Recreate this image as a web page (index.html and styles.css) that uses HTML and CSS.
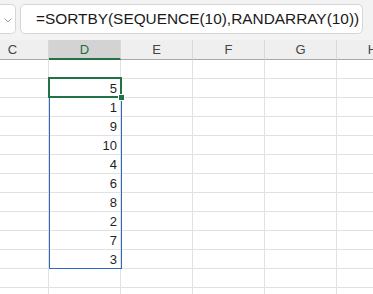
FILE: index.html
```html
<!DOCTYPE html>
<html lang="en">
<head>
    <meta charset="UTF-8">
    <title>SORTBY</title>
    <link rel="stylesheet" href="styles.css">
</head>
<body>
    <div class="formula-bar">
        <div class="name-box">
            <svg class="chevron" width="8" height="5" viewBox="0 0 8 5">
                <path d="M0.5 0.5 L4 4 L7.5 0.5" fill="none" stroke="#9a9a9a" stroke-width="1"/>
            </svg>
        </div>
        <div class="formula-input">=SORTBY(SEQUENCE(10),RANDARRAY(10))</div>
    </div>

    <div class="sheet">
        <div class="col-head">C</div>
        <div class="col-head active">D</div>
        <div class="col-head">E</div>
        <div class="col-head">F</div>
        <div class="col-head">G</div>
        <div class="col-head">H</div>
    </div>

    <div class="sheet grid" id="grid">
        <div class="range"></div>
        <div class="selection"></div>
        <div class="fill-handle"></div>
    </div>

    <script>
        // build the visible rows: one empty row, ten spilled values, two more empty rows
        const values = ['', 5, 1, 9, 10, 4, 6, 8, 2, 7, 3, '', ''];
        const grid = document.getElementById('grid');
        values.forEach(v => {
            for (let c = 0; c < 6; c++) {
                const cell = document.createElement('div');
                cell.className = 'cell';
                if (c === 1) cell.textContent = v;
                grid.appendChild(cell);
            }
        });
    </script>
</body>
</html>
```

FILE: styles.css
```css
body {
    margin: 0;
    background: #fff;
    font-family: 'Liberation Sans', Arial, sans-serif;
    color: #1f1f1f;
    overflow: hidden;
}
.formula-bar {
    display: flex;
    gap: 4px;
    height: 40px;
    padding: 4px 10px 0 0;
    box-sizing: border-box;
    background: #f3f3f3;
}
.name-box {
    width: 16px;
    height: 30px;
    box-sizing: border-box;
    background: #fff;
    border: 1px solid #d6d6d6;
    border-left: none;
    border-radius: 0 5px 5px 0;
    display: flex;
    align-items: center;
    padding-left: 4px;
}
.chevron {
    display: block;
    margin-top: 2px;
}
.formula-input {
    flex: 1;
    height: 30px;
    box-sizing: border-box;
    background: #fff;
    border: 1px solid #d6d6d6;
    border-radius: 5px;
    padding-left: 15px;
    font-size: 15.4px;
    line-height: 28px;
    white-space: nowrap;
    overflow: hidden;
    color: #1a1a1a;
}
.sheet {
    display: grid;
    grid-template-columns: repeat(6, 72px);
    margin-left: -23px;
}
.col-head {
    height: 20px;
    box-sizing: border-box;
    background: #efefef;
    border-right: 1px solid #d8d8d8;
    border-bottom: 1px solid #a9a9a9;
    text-align: center;
    font-size: 13px;
    line-height: 20px;
    color: #444;
}
.col-head.active {
    background: #d3d3d3;
    border-bottom: 2px solid #217346;
    color: #1d6b3f;
}
.grid {
    grid-auto-rows: 19px;
    position: relative;
}
.cell {
    box-sizing: border-box;
    border-right: 1px solid #e1e1e1;
    border-bottom: 1px solid #e1e1e1;
    text-align: right;
    padding: 2px 3px 0 0;
    font-size: 13px;
    line-height: 16px;
}
.range {
    position: absolute;
    left: 72px;
    top: 18px;
    width: 73px;
    height: 191px;
    box-sizing: border-box;
    border: 1px solid #2e68c5;
}
.selection {
    position: absolute;
    left: 71px;
    top: 17px;
    width: 74px;
    height: 21px;
    box-sizing: border-box;
    border: 2px solid #217346;
}
.fill-handle {
    position: absolute;
    left: 142px;
    top: 35px;
    width: 5px;
    height: 5px;
    background: #217346;
    box-shadow: 0 0 0 1px #fff;
}
```
